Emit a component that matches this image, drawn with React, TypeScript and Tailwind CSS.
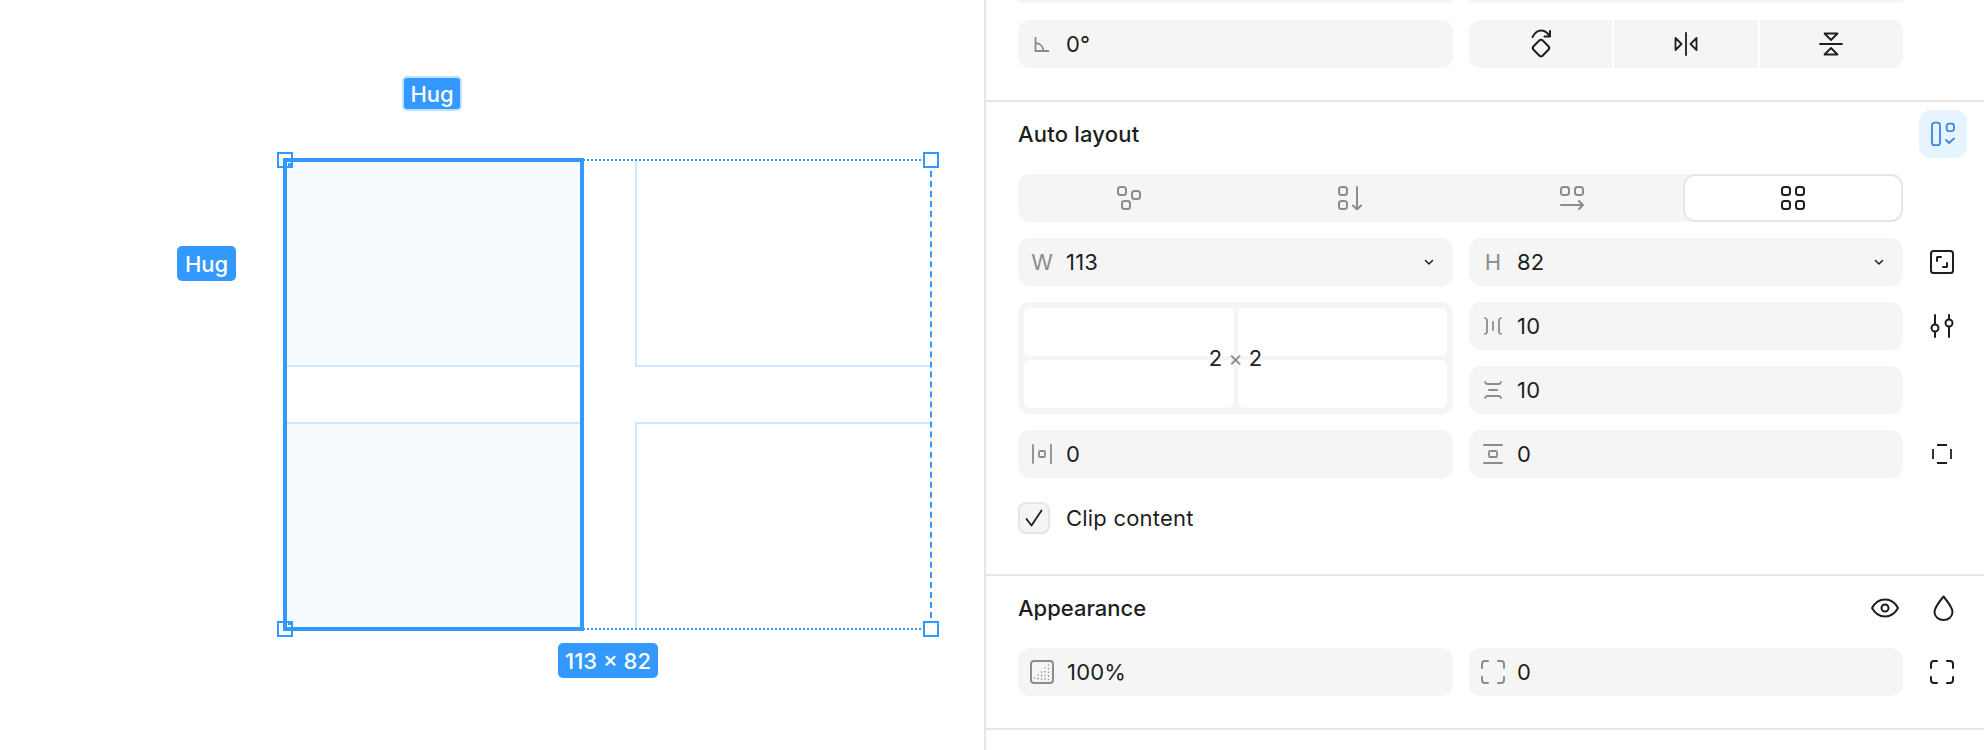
import React from "react";

const G = "#8c8c8c";
const K = "#1e1e1e";

function Ico({ w = 24, h = 24, c = K, sw = 2, children }: { w?: number; h?: number; c?: string; sw?: number; children: React.ReactNode }) {
  return (
    <svg width={w} height={h} viewBox={`0 0 ${w} ${h}`} fill="none" stroke={c} strokeWidth={sw} strokeLinecap="round" strokeLinejoin="round" className="block shrink-0">
      {children}
    </svg>
  );
}

function Rects({ pts }: { pts: number[][] }) {
  return (
    <>
      {pts.map(([x, y], i) => (
        <rect key={i} x={x - 4} y={y - 4} width={8} height={8} rx={2.5} />
      ))}
    </>
  );
}

function Field({ icon, value, chevron, valueClass = "" }: { icon?: React.ReactNode; value: string; chevron?: boolean; valueClass?: string }) {
  return (
    <div className="flex h-12 items-center rounded-xl bg-[#f5f5f5]">
      <div className="flex w-12 shrink-0 items-center justify-center">{icon}</div>
      <span className={`flex-1 text-[22px] leading-none tracking-[0.2px] text-[#1e1e1e] ${valueClass}`}>{value}</span>
      {chevron && (
        <div className="flex w-12 shrink-0 items-center justify-center">
          <Ico w={10} h={7} sw={1.5}>
            <path d="M1.500 1.500l3.500 3.500 3.500-3.500" />
          </Ico>
        </div>
      )}
    </div>
  );
}

function Letter({ t }: { t: string }) {
  return <span className="text-[22px] leading-none text-[#8c8c8c]">{t}</span>;
}

function CornerIcon({ c }: { c: string }) {
  return (
    <Ico c={c}>
      <path d="M1 8V4a3 3 0 0 1 3-3h3M17 1h3a3 3 0 0 1 3 3v4M23 17v3a3 3 0 0 1-3 3h-3M7 23H4a3 3 0 0 1-3-3v-3" />
    </Ico>
  );
}

function Badge({ children, className }: { children: React.ReactNode; className: string }) {
  return (
    <div className={`absolute flex h-[35px] items-center justify-center rounded-[5px] bg-[#3399ff] text-[22px] font-medium leading-none text-white ${className}`}>
      {children}
    </div>
  );
}

function Handle({ className }: { className: string }) {
  return <div className={`absolute h-4 w-4 border-2 border-[#3399ff] bg-white ${className}`} />;
}

function Canvas() {
  return (
    <div className="relative h-[750px] w-[984px] shrink-0 bg-white">
      <Badge className="left-[402px] top-[76px] w-[60px] border-2 border-[#bfe0ff]">Hug</Badge>
      <Badge className="left-[177px] top-[246px] w-[59px]">Hug</Badge>
      <Badge className="left-[558px] top-[643px] w-[100px] text-[21px]">113 × 82</Badge>

      <div className="absolute left-[284px] top-[159px] h-[471px] w-[648px] border-x-0 border-y-2 border-dotted border-[#3399ff]">
        <div className="absolute bottom-0 right-0 top-0 border-r-2 border-dashed border-[#3399ff]" />
        <div className="grid h-full grid-cols-[298px_296px] grid-rows-[206px_206px] gap-x-[53px] gap-y-[55px]">
          <div className="border-b-2 border-[#cfe6fb] bg-[#f6fbff]" />
          <div className="border-b-2 border-l-2 border-[#cfe6fb]" />
          <div className="border-t-2 border-[#cfe6fb] bg-[#f6fbff]" />
          <div className="border-l-2 border-t-2 border-[#cfe6fb]" />
        </div>
      </div>

      <div className="absolute left-[283px] top-[158px] h-[473px] w-[301px] border-[4px] border-[#3399ff]" />

      <Handle className="left-[277px] top-[152px]" />
      <Handle className="left-[277px] top-[621px]" />
      <Handle className="left-[923px] top-[152px]" />
      <Handle className="left-[923px] top-[621px]" />
      <div className="absolute left-[283px] top-[158px] h-[9px] w-[10px] border-l-[4px] border-t-[4px] border-[#3399ff]" />
      <div className="absolute left-[283px] top-[622px] h-[9px] w-[10px] border-b-[4px] border-l-[4px] border-[#3399ff]" />
      <div className="absolute left-[288px] top-[163px] h-[4px] w-[4px] bg-[#3399ff]" />
      <div className="absolute left-[288px] top-[621px] h-[4px] w-[4px] bg-[#3399ff]" />
    </div>
  );
}

function Panel() {
  return (
    <div className="min-w-0 flex-1 border-l-2 border-[#e6e6e6] bg-white text-[#1e1e1e]">
      {/* Transform */}
      <div className="border-b-2 border-[#e6e6e6] pb-8 pl-8">
        <div className="grid w-[885px] grid-cols-[435px_434px] gap-x-4">
          <div className="h-[3px] rounded-b-xl bg-[#f5f5f5]" />
          <div className="h-[3px] rounded-b-xl bg-[#f5f5f5]" />
        </div>
        <div className="mt-[17px] grid w-[885px] grid-cols-[435px_434px] gap-x-4">
          <Field
            value="0°"
            icon={
              <Ico w={16} h={16} c={G} sw={1.8}>
                <path d="M1.500 1v14H15" strokeLinecap="butt" />
                <path d="M1.500 7c4.500 0 7.500 3.500 8 8" strokeLinecap="butt" />
              </Ico>
            }
          />
          <div className="grid h-12 grid-cols-3 gap-[2px] overflow-hidden rounded-xl">
            <div className="flex items-center justify-center bg-[#f5f5f5]">
              <Ico w={22} h={30}>
                <rect x="4.500" y="12.500" width="13" height="13" rx="2.500" transform="rotate(45 11 19)" />
                <path d="M2.500 8C5 3.500 8 1.500 11 1.500c3 0 6 1.500 8.500 5.500M20 2v5.500h-5.500" />
              </Ico>
            </div>
            <div className="flex items-center justify-center bg-[#f5f5f5]">
              <Ico w={24} h={24} sw={1.8}>
                <path d="M12 1v22" />
                <path d="M1.500 6v12l6-6zM22.500 6v12l-6-6z" />
              </Ico>
            </div>
            <div className="flex items-center justify-center bg-[#f5f5f5]">
              <Ico w={24} h={24} sw={1.8}>
                <path d="M1 12h22" />
                <path d="M5.500 1.500h13L12 8zM5.500 22.500h13L12 16z" />
              </Ico>
            </div>
          </div>
        </div>
      </div>

      {/* Auto layout */}
      <div className="border-b-2 border-[#e6e6e6] pb-10 pl-8 pt-2">
        <div className="flex h-12 items-center justify-between">
          <span className="text-[22px] font-medium leading-none tracking-[0.2px]">Auto layout</span>
          <div className="mr-[17px] flex h-12 w-12 items-center justify-center rounded-xl bg-[#e5f4ff]">
            <Ico w={26} h={26} c="#3b86e0" sw={1.8}>
              <rect x="2" y="1.700" width="8" height="22.500" rx="2.500" />
              <rect x="16.600" y="2.700" width="7.400" height="7.400" rx="2.500" />
              <path d="M16 19l3 3 5-4.500" />
            </Ico>
          </div>
        </div>

        <div className="mt-4 grid h-12 w-[885px] grid-cols-[221px_221px_223px_220px] rounded-xl bg-[#f5f5f5]">
          <div className="flex items-center justify-center">
            <Ico c={G}>
              <Rects pts={[[5, 5], [19, 9], [9, 19]]} />
            </Ico>
          </div>
          <div className="flex items-center justify-center">
            <Ico c={G}>
              <Rects pts={[[5, 5], [5, 19]]} />
              <path d="M19 1v22M15 19.500l4 4 4-4" />
            </Ico>
          </div>
          <div className="flex items-center justify-center">
            <Ico c={G}>
              <Rects pts={[[5, 5], [19, 5]]} />
              <path d="M1 19h22M19 15l4 4-4 4" />
            </Ico>
          </div>
          <div className="flex items-center justify-center rounded-xl border-2 border-[#e6e6e6] bg-white">
            <Ico>
              <Rects pts={[[5, 5], [19, 5], [5, 19], [19, 19]]} />
            </Ico>
          </div>
        </div>

        <div className="mt-4 flex">
          <div className="grid w-[885px] grid-cols-[435px_434px] gap-x-4 gap-y-4">
            <Field icon={<Letter t="W" />} value="113" chevron />
            <Field icon={<Letter t="H" />} value="82" chevron />

            <div className="relative row-span-2 grid h-[112px] grid-cols-2 grid-rows-2 gap-1 rounded-xl bg-[#f5f5f5] p-[6px]">
              <div className="rounded-md bg-white" />
              <div className="rounded-md bg-white" />
              <div className="rounded-md bg-white" />
              <div className="rounded-md bg-white" />
              <div className="absolute inset-0 flex items-center justify-center gap-[6px] text-[22px] leading-none">
                <span>2</span>
                <span className="text-[#8c8c8c]">×</span>
                <span>2</span>
              </div>
            </div>
            <Field
              value="10"
              icon={
                <Ico w={18} h={18} c={G} sw={1.8}>
                  <path d="M1 1c1.500.500 2 1 2 2v12c0 1-.500 1.500-2 2M17 1c-1.500.500-2 1-2 2v12c0 1 .500 1.500 2 2M9 5v8" />
                </Ico>
              }
            />
            <Field
              value="10"
              icon={
                <Ico w={18} h={18} c={G} sw={1.8}>
                  <path d="M1 1c.500 1.500 1 2 2 2h12c1 0 1.500-.500 2-2M1 17c.500-1.500 1-2 2-2h12c1 0 1.500.500 2 2M5 9h8" />
                </Ico>
              }
            />

            <Field
              value="0"
              icon={
                <Ico w={20} h={20} c={G} sw={1.8}>
                  <path d="M1 1v18M19 1v18" />
                  <rect x="7" y="7" width="6" height="6" rx="1" />
                </Ico>
              }
            />
            <Field
              value="0"
              icon={
                <Ico w={20} h={20} c={G} sw={1.8}>
                  <path d="M1 1h18M1 19h18" />
                  <rect x="6" y="7" width="8" height="6" rx="1" />
                </Ico>
              }
            />
          </div>
          <div className="ml-[27px] flex w-6 flex-col items-center">
            <div className="flex h-12 items-center">
              <Ico>
                <rect x="1" y="1" width="22" height="22" rx="2.500" />
                <path d="M7 11V7.500A.500.500 0 0 1 7.500 7H11M17 13v3.500a.500.500 0 0 1-.500.500H13" />
              </Ico>
            </div>
            <div className="mt-4 flex h-12 items-center">
              <Ico>
                <path d="M5 1v9M5 18v5M19 1v4M19 13v10" />
                <circle cx="5" cy="14" r="3.500" />
                <circle cx="19" cy="9" r="3.500" />
              </Ico>
            </div>
            <div className="mt-[80px] flex h-12 items-center">
              <Ico w={20} h={20} sw={1.8}>
                <path d="M5 1h10M5 19h10M1 5v10M19 5v10" strokeLinecap="butt" />
              </Ico>
            </div>
          </div>
        </div>

        <div className="mt-6 flex h-8 items-center gap-4">
          <div className="flex h-8 w-8 items-center justify-center rounded-lg border-2 border-[#e6e6e6] bg-[#f5f5f5]">
            <Ico w={18} h={18} sw={1.8}>
              <path d="M1.500 10l5 6.500L16.500 1.500" />
            </Ico>
          </div>
          <span className="text-[22px] leading-none tracking-[0.2px]">Clip content</span>
        </div>
      </div>

      {/* Appearance */}
      <div className="border-b-2 border-[#e6e6e6] pb-8 pl-8 pt-2">
        <div className="flex h-12 items-center justify-between">
          <span className="text-[22px] font-medium leading-none">Appearance</span>
          <div className="mr-[30px] flex items-center gap-[34px]">
            <Ico w={28} h={20}>
              <path d="M1 10c3-5.500 8-8.500 13-8.500S24 4.500 27 10c-3 5.500-8 8.500-13 8.500S4 15.500 1 10z" />
              <circle cx="14" cy="10" r="3.500" />
            </Ico>
            <Ico w={21} h={26}>
              <path d="M10.500 1.500c-5 6-9 11-9 15.500a9 8 0 0 0 18 0c0-4.500-4-9.500-9-15.500z" />
            </Ico>
          </div>
        </div>
        <div className="mt-4 flex">
          <div className="grid w-[885px] grid-cols-[435px_434px] gap-x-4">
            <Field
              value="100%"
              valueClass="pl-[1px]"
              icon={
                <Ico c={G}>
                  <rect x="1" y="1" width="22" height="22" rx="3" />
                  <g strokeWidth="1.500" strokeDasharray="0.1 3.500" stroke={G}>
                    <path d="M18.500 5v15M15 8v12M11.500 12v8M8 15v5M4.500 18v2" />
                  </g>
                </Ico>
              }
            />
            <Field value="0" icon={<CornerIcon c={G} />} />
          </div>
          <div className="ml-[27px] flex h-12 w-6 items-center justify-center">
            <CornerIcon c={K} />
          </div>
        </div>
      </div>
    </div>
  );
}

export default function App() {
  return (
    <div className="flex h-[750px] w-[1984px] overflow-hidden bg-white font-['Inter',sans-serif]">
      <Canvas />
      <Panel />
    </div>
  );
}
